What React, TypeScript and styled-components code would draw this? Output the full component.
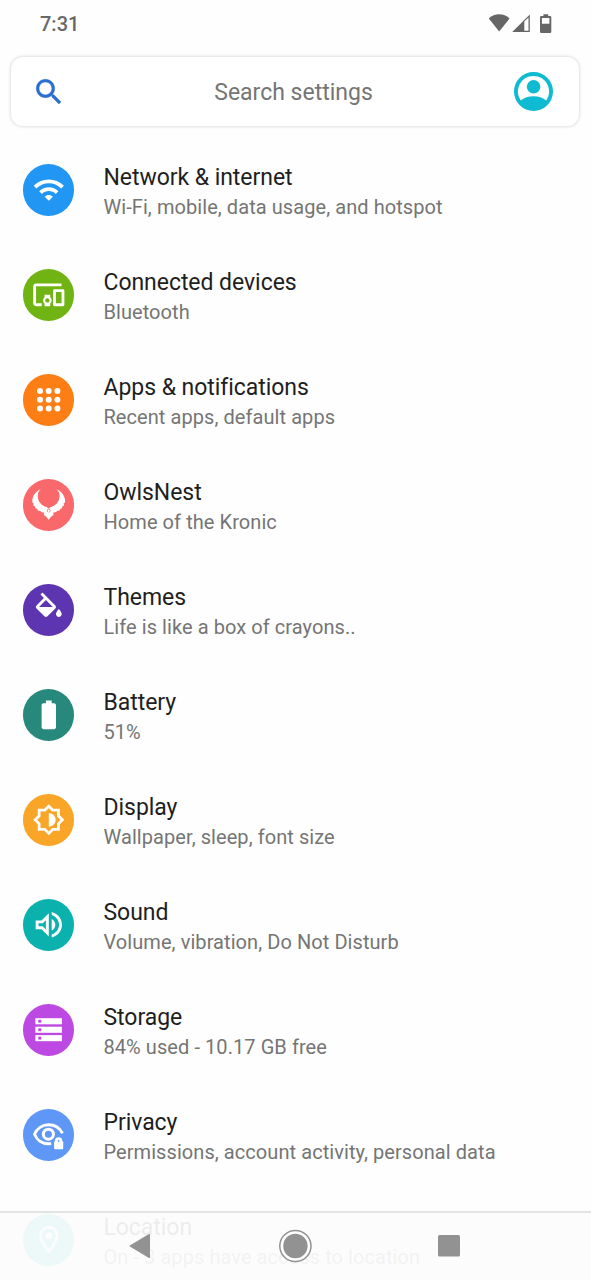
import React from "react";
import styled, { createGlobalStyle } from "styled-components";

const GlobalStyle = createGlobalStyle`
  * { box-sizing: border-box; }
  html, body { margin: 0; padding: 0; background: #fefefe; }
  body { font-family: Roboto, "Liberation Sans", sans-serif; overflow: hidden; }
  svg { display: block; }
`;

const Screen = styled.main`
  position: relative;
  width: 591px;
  height: 1280px;
  overflow: hidden;
  background: #fefefe;
`;

const StatusBar = styled.header`
  display: flex;
  justify-content: space-between;
  align-items: center;
  height: 46px;
  padding: 0 39px 0 40px;
`;

const Clock = styled.time`
  font-size: 20px;
  font-weight: 500;
  line-height: 24px;
  color: #686868;
  padding-top: 1px;
`;

const SearchCard = styled.section`
  display: flex;
  align-items: center;
  height: 69px;
  margin: 11px 12px 0 11px;
  padding: 0 26px 0 20.5px;
  border-radius: 12px;
  background: #fff;
  box-shadow: 0 0 3px 1px rgba(0, 0, 0, 0.12);
`;

const SearchHint = styled.span`
  flex: 1;
  text-align: center;
  font-size: 23px;
  line-height: 28px;
  color: #757575;
  padding: 2px 0 0 7.5px;
`;

const List = styled.ul`
  list-style: none;
  margin: 11.4px 0 0;
  padding: 0;
`;

const Row = styled.li`
  display: flex;
  align-items: center;
  height: 105px;
  padding: 0 22.7px;
`;

const Badge = styled.span<{ $color: string }>`
  flex: none;
  width: 51.6px;
  height: 51.6px;
  border-radius: 50%;
  background: ${(p) => p.$color};
  color: #fff;
`;

const Labels = styled.div`
  display: flex;
  flex-direction: column;
  margin-left: 29.2px;
  padding-top: 5px;
  white-space: nowrap;
`;

const Title = styled.span`
  font-size: 23px;
  line-height: 30px;
  letter-spacing: -0.05px;
  color: #1f1f1f;
`;

const Summary = styled.span`
  font-size: 20px;
  line-height: 28px;
  letter-spacing: 0.07px;
  color: #757575;
`;

const NavBar = styled.nav`
  position: absolute;
  left: 0;
  right: 0;
  bottom: 0;
  height: 69px;
  border-top: 2px solid #e2e3e3;
  background: rgba(252, 252, 252, 0.93);
  display: flex;
  align-items: center;
  justify-content: space-between;
  padding: 0 131px 2px 129.2px;
  color: #929292;
`;

/* Material glyphs are drawn on a 24-unit grid, centred in the 51.6px badge. */
const Glyph = ({ d, size = 34.5 }: { d: string; size?: number }) => {
  const o = (51.6 - size) / 2;
  return (
    <svg width="51.6" height="51.6" viewBox="0 0 51.6 51.6" fill="currentColor">
      <path transform={`translate(${o} ${o}) scale(${size / 24})`} d={d} fillRule="evenodd" />
    </svg>
  );
};

const Dots = () => (
  <svg width="51.6" height="51.6" viewBox="0 0 51.6 51.6" fill="currentColor">
    {[17, 25.7, 34.4].map((y) =>
      [17, 25.7, 34.4].map((x) => <circle key={`${x}-${y}`} cx={x} cy={y} r="3" />),
    )}
  </svg>
);

const Owl = () => (
  <svg width="51.6" height="51.6" viewBox="0 0 154.8 154.8" fill="currentColor">
    <path d="M54 31C42 38 42 58 50 70C56 79 64 83 71 84L77 89L83 84C90 83 98 79 104 70C112 58 112 38 100 31C114 36 123 47 126 62L126 71L122 73L123 80L118 82L117 88L112 89L109 95L103 95L99 99L90 101L92 107L84 113L77 122L70 113L62 107L64 101L55 99L51 95L45 95L42 89L37 88L36 82L31 80L32 73L28 71L28 62C31 47 40 36 54 31Z" />
    <circle cx="77" cy="95" r="5.5" fill="#f9696b" />
    <path d="M73 95l4-5 4 5-4 6z" />
  </svg>
);

const StorageBars = () => (
  <svg width="51.6" height="51.6" viewBox="0 0 51.6 51.6">
    {[14.2, 22.7, 31.1].map((y) => (
      <g key={y}>
        <rect x="12.4" y={y} width="26.5" height="6.1" fill="currentColor" />
        <rect x="15.3" y={y + 1.6} width="3" height="2.9" fill="#bd49e3" />
      </g>
    ))}
  </svg>
);

const PrivacyEye = () => (
  <svg width="51.6" height="51.6" viewBox="0 0 51.6 51.6" fill="none" stroke="currentColor">
    <path d="M39.6 24.2C36.7 19 31.4 15.7 25.6 15.7C19.2 15.7 13.8 19.6 11.5 25.3C13.8 31 19.2 34.8 25.6 34.8L28.2 34.6" strokeWidth="2.9" />
    <circle cx="25.4" cy="25.2" r="5" strokeWidth="3" />
    <path d="M32.9 33.2v-1.2a2.7 2.7 0 0 1 5.4 0v1.2z" strokeWidth="2" fill="currentColor" />
    <rect x="31.1" y="32.2" width="9.1" height="8" rx="1" fill="currentColor" stroke="none" />
    <circle cx="35.6" cy="31.9" r="0.9" fill="#5e97f5" stroke="none" />
  </svg>
);

const WIFI =
  "M1 9l2 2c4.97-4.97 13.03-4.97 18 0l2-2C16.93 2.93 7.08 2.93 1 9zm8 8l3 3 3-3c-1.65-1.66-4.34-1.66-6 0zm-4-4l2 2c2.76-2.76 7.24-2.76 10 0l2-2C15.14 9.14 8.87 9.14 5 13z";
const DEVICES =
  "M3 6h18V4H3c-1.1 0-2 .9-2 2v12c0 1.1.9 2 2 2h4v-2H3V6zm10 6H9v1.78c-.61.55-1 1.33-1 2.22s.39 1.67 1 2.22V20h4v-1.78c.61-.55 1-1.34 1-2.22s-.39-1.67-1-2.22V12zm-2 5.5c-.83 0-1.5-.67-1.5-1.5s.67-1.5 1.5-1.5 1.5.67 1.5 1.5-.67 1.5-1.5 1.5zM22 8h-6c-.5 0-1 .5-1 1v10c0 .5.5 1 1 1h6c.5 0 1-.5 1-1V9c0-.5-.5-1-1-1zm-1 10h-4v-8h4v8z";
const PAINT =
  "M16.56 8.94L7.62 0 6.21 1.41l2.38 2.38-5.15 5.15c-.59.59-.59 1.54 0 2.12l5.5 5.5c.29.29.68.44 1.06.44s.77-.15 1.06-.44l5.5-5.5c.59-.58.59-1.53 0-2.12zM5.21 10L10 5.21 14.79 10H5.21zM19 11.5s-2 2.17-2 3.5c0 1.1.9 2 2 2s2-.9 2-2c0-1.33-2-3.5-2-3.5z";
const BATTERY =
  "M15.67 4H14V2h-4v2H8.33C7.6 4 7 4.6 7 5.33v15.33C7 21.4 7.6 22 8.33 22h7.33c.74 0 1.34-.6 1.34-1.33V5.33C17 4.6 16.4 4 15.67 4z";
const BRIGHTNESS =
  "M20 8.69V4h-4.69L12 .69 8.69 4H4v4.69L.69 12 4 15.31V20h4.69L12 23.31 15.31 20H20v-4.69L23.31 12 20 8.69zm-2 5.79V18h-3.52L12 20.48 9.52 18H6v-3.52L3.52 12 6 9.52V6h3.52L12 3.52 14.48 6H18v3.52L20.48 12 18 14.48zM12 7v10c2.76 0 5-2.24 5-5s-2.24-5-5-5z";
const VOLUME =
  "M3 9v6h4l5 5V4L7 9H3zm7-.17v6.34L7.83 13H5v-2h2.83L10 8.83zM16.5 12c0-1.77-1.02-3.29-2.5-4.03v8.05c1.48-.73 2.5-2.25 2.5-4.02zM14 3.23v2.06c2.89.86 5 3.54 5 6.71s-2.11 5.85-5 6.71v2.06c4.01-.91 7-4.49 7-8.77 0-4.28-2.99-7.86-7-8.77z";
const PIN =
  "M12 2C8.13 2 5 5.13 5 9c0 5.25 7 13 7 13s7-7.75 7-13c0-3.87-3.13-7-7-7zM7 9c0-2.76 2.24-5 5-5s5 2.24 5 5c0 2.88-2.88 7.19-5 9.88C9.92 16.21 7 11.85 7 9zM12 6.5a2.5 2.5 0 1 0 0 5a2.5 2.5 0 1 0 0-5z";

const ITEMS = [
  { title: "Network & internet", summary: "Wi-Fi, mobile, data usage, and hotspot", color: "#2196f3", icon: <Glyph d={WIFI} size={33} /> },
  { title: "Connected devices", summary: "Bluetooth", color: "#70b413", icon: <Glyph d={DEVICES} size={34} /> },
  { title: "Apps & notifications", summary: "Recent apps, default apps", color: "#fd7e14", icon: <Dots /> },
  { title: "OwlsNest", summary: "Home of the Kronic", color: "#f9696b", icon: <Owl /> },
  { title: "Themes", summary: "Life is like a box of crayons..", color: "#5e35b1", icon: <Glyph d={PAINT} /> },
  { title: "Battery", summary: "51%", color: "#26897c", icon: <Glyph d={BATTERY} /> },
  { title: "Display", summary: "Wallpaper, sleep, font size", color: "#f9a528", icon: <Glyph d={BRIGHTNESS} size={33} /> },
  { title: "Sound", summary: "Volume, vibration, Do Not Disturb", color: "#0bb1ad", icon: <Glyph d={VOLUME} size={35} /> },
  { title: "Storage", summary: "84% used - 10.17 GB free", color: "#bd49e3", icon: <StorageBars /> },
  { title: "Privacy", summary: "Permissions, account activity, personal data", color: "#5e97f5", icon: <PrivacyEye /> },
  { title: "Location", summary: "On - 3 apps have access to location", color: "#29c6c3", icon: <Glyph d={PIN} size={33} /> },
];

const StatusIcons = () => (
  <svg width="64" height="22" viewBox="488 11 64 22" fill="#666">
    <path d="M499.2 30.6L488.8 17.4C491.8 14.6 495.4 13.2 499.2 13.2C503 13.2 506.6 14.6 509.6 17.4Z" />
    <path fillRule="evenodd" d="M512.2 31L529.8 13.4V31ZM524.3 20.6V29.7H528.5V16.5Z" />
    <path fillRule="evenodd" d="M543.4 15V13.2H548.2V15H550Q551.3 15 551.3 16.3V30.7Q551.3 32 550 32H541.3Q540 32 540 30.7V16.3Q540 15 541.3 15ZM541.9 17V22.8H549.4V17Z" />
  </svg>
);

const SearchIcon = () => (
  <svg width="34" height="34" viewBox="0 0 24 24" fill="#2a6fd0" stroke="#2a6fd0" strokeWidth="0.3">
    <path d="M15.5 14h-.79l-.28-.27C15.41 12.59 16 11.11 16 9.5 16 5.91 13.09 3 9.5 3S3 5.91 3 9.5 5.91 16 9.5 16c1.61 0 3.09-.59 4.23-1.57l.27.28v.79l5 4.99L20.49 19l-4.99-5zm-6 0C7.01 14 5 11.99 5 9.5S7.01 5 9.5 5 14 7.01 14 9.5 11.99 14 9.5 14z" />
  </svg>
);

const Avatar = () => (
  <svg width="39" height="39" viewBox="0 0 39 39" fill="#0fbbd2">
    <path fillRule="evenodd" d="M19.5 0a19.5 19.5 0 1 0 0 39a19.5 19.5 0 1 0 0-39zM19.5 3.9A15.6 15.6 0 0 1 32.3 28.4C29 25.8 24.6 24.2 19.5 24.2C14.4 24.2 10 25.8 6.7 28.4A15.6 15.6 0 0 1 19.5 3.9z" />
    <circle cx="19.6" cy="14.7" r="6.8" />
  </svg>
);

const BackIcon = () => (
  <svg width="22" height="26" viewBox="0 0 22 26" fill="currentColor">
    <path d="M1.2 12.2L19.6 1.2Q21 .5 21 2V24Q21 25.4 19.6 24.7L1.2 13.8Q0 13 1.2 12.2Z" />
  </svg>
);

const HomeIcon = () => (
  <svg width="34" height="34" viewBox="0 0 34 34" fill="currentColor">
    <circle cx="17.4" cy="17" r="15.6" fill="#fefefe" stroke="currentColor" strokeWidth="1.5" />
    <circle cx="17.4" cy="17" r="12.2" />
  </svg>
);

const RecentsIcon = () => (
  <svg width="22" height="22" viewBox="0 0 22 22" fill="currentColor">
    <rect width="22" height="21.6" rx="1.5" />
  </svg>
);

export default function App() {
  return (
    <Screen>
      <GlobalStyle />
      <StatusBar>
        <Clock>7:31</Clock>
        <StatusIcons />
      </StatusBar>
      <SearchCard>
        <SearchIcon />
        <SearchHint>Search settings</SearchHint>
        <Avatar />
      </SearchCard>
      <List>
        {ITEMS.map((item) => (
          <Row key={item.title}>
            <Badge $color={item.color}>{item.icon}</Badge>
            <Labels>
              <Title>{item.title}</Title>
              <Summary>{item.summary}</Summary>
            </Labels>
          </Row>
        ))}
      </List>
      <NavBar>
        <BackIcon />
        <HomeIcon />
        <RecentsIcon />
      </NavBar>
    </Screen>
  );
}
